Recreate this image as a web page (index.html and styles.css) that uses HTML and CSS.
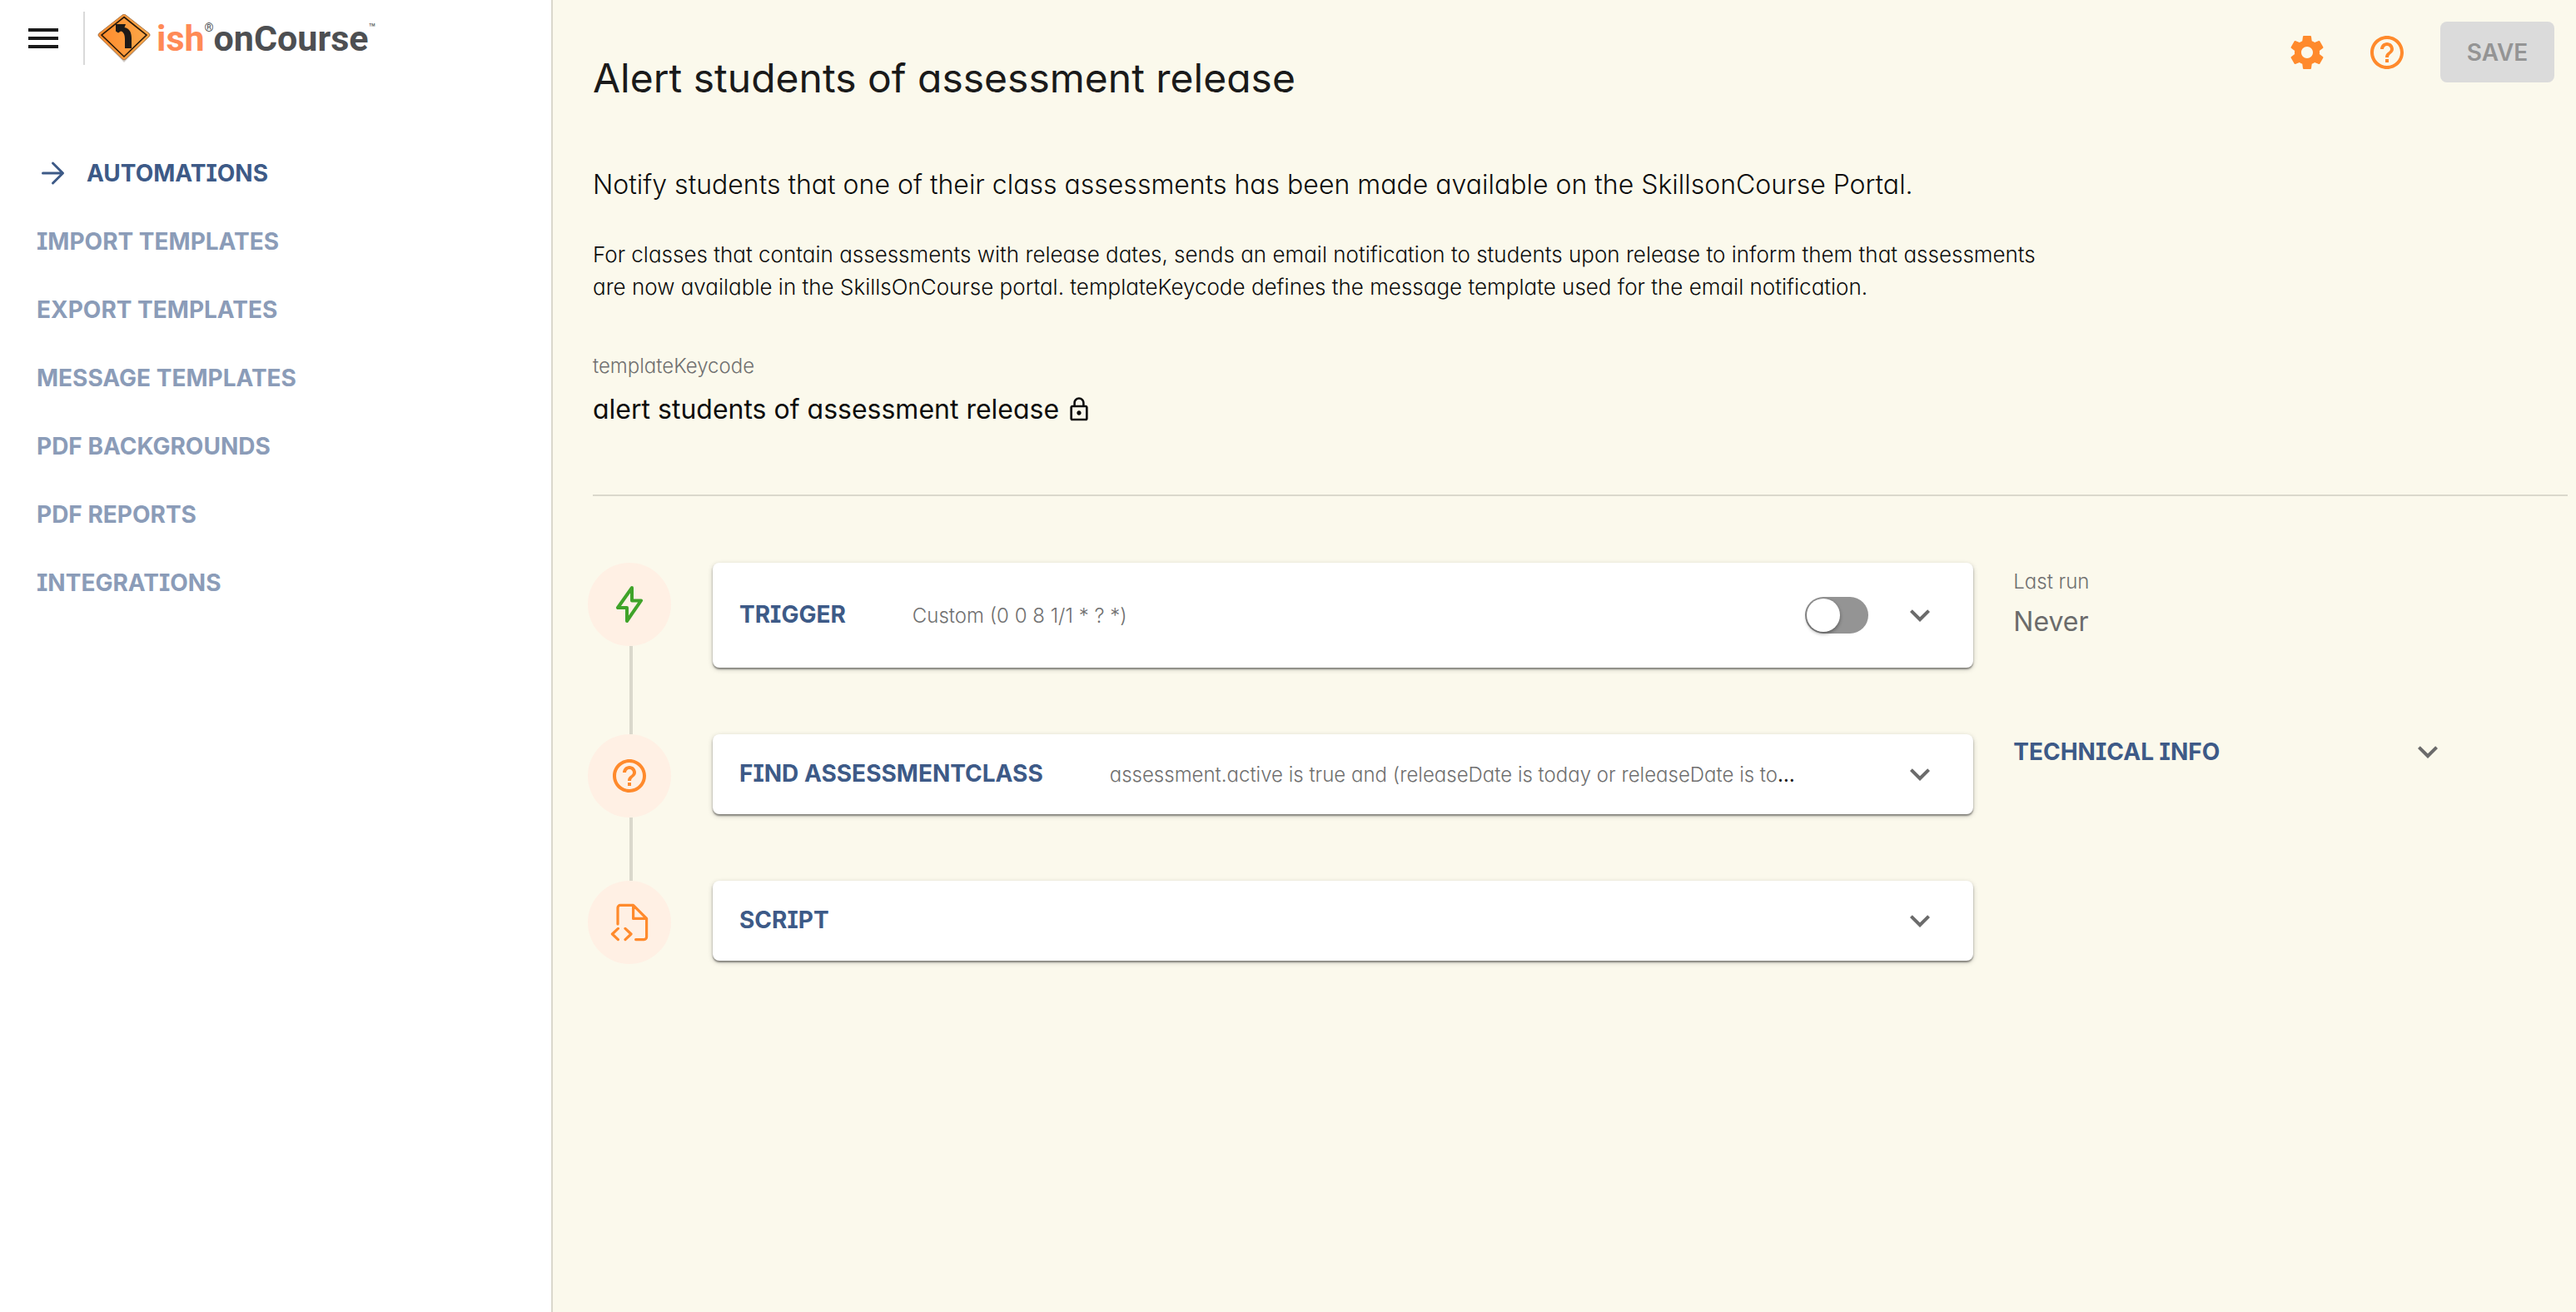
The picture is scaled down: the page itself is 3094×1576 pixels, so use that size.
FILE: index.html
```html
<!DOCTYPE html>
<html lang="en">
<head>
<meta charset="utf-8">
<title>Alert students of assessment release</title>
<link rel="stylesheet" href="styles.css">
</head>
<body>
<div class="app">
  <aside class="sidebar">
    <header class="brand-bar">
      <button class="icon-btn" type="button" aria-label="Menu">
        <svg class="icon" viewBox="0 0 24 24"><path fill="#1a1a1a" d="M3 18h18v-2H3v2zm0-5h18v-2H3v2zm0-7v2h18V6H3z"/></svg>
      </button>
      <a class="brand" href="#">
        <svg class="brand-sign" viewBox="0 0 66 58" aria-hidden="true">
          <defs><linearGradient id="sign" x1="0" y1="0" x2="1" y2="0"><stop offset="0" stop-color="#ff8a2c"/><stop offset="1" stop-color="#fba94a"/></linearGradient></defs>
          <path d="M33 1 65 25 33 58 1 25Z" fill="#6b5a48" opacity=".3"/>
          <path d="M31 1 Q33 -1 35 1L63 23Q65 25 63 27L35 54Q33 56 31 54L3 27Q1 25 3 23Z" fill="url(#sign)" stroke="#a8794c" stroke-width="1"/>
          <path d="M33 3.500 60 25 33 51 6 25Z" fill="none" stroke="#2a1a0a" stroke-width="1.600"/>
          <path d="M23 12h12l-1.500 4c6 1 8.500 6 8.500 13v12h-8V30c0-6-2-9-5-9.500l-3 2-3-2Z" fill="#1d1a18"/>
        </svg>
        <span class="brand-name"><span class="brand-ish">ish</span><sup class="brand-reg">®</sup><span>onCourse</span><sup class="brand-tm">™</sup></span>
      </a>
    </header>
    <nav class="nav">
      <a class="nav-link nav-link-active" href="#">
        <svg class="nav-arrow" viewBox="0 0 24 24" fill="none" stroke="currentColor" stroke-width="2" stroke-linecap="round" stroke-linejoin="round"><path d="M5 12h15.500M13 4l8 8-8 8"/></svg>
        AUTOMATIONS</a>
      <a class="nav-link" href="#">IMPORT TEMPLATES</a>
      <a class="nav-link" href="#">EXPORT TEMPLATES</a>
      <a class="nav-link" href="#">MESSAGE TEMPLATES</a>
      <a class="nav-link" href="#">PDF BACKGROUNDS</a>
      <a class="nav-link" href="#">PDF REPORTS</a>
      <a class="nav-link" href="#">INTEGRATIONS</a>
    </nav>
  </aside>

  <main class="main">
    <header class="page-head">
      <h1 class="title">Alert students of assessment release</h1>
      <div class="actions">
        <button class="icon-btn" type="button" aria-label="Settings">
          <svg class="icon accent" viewBox="0 0 24 24"><path fill="currentColor" d="M19.43 12.98c.04-.32.07-.64.07-.98s-.03-.66-.07-.98l2.11-1.65c.19-.15.24-.42.12-.64l-2-3.46c-.12-.22-.39-.3-.61-.22l-2.49 1c-.52-.4-1.08-.73-1.69-.98l-.38-2.65C14.46 2.18 14.25 2 14 2h-4c-.25 0-.46.18-.49.42l-.38 2.65c-.61.25-1.17.59-1.69.98l-2.49-1c-.23-.09-.49 0-.61.22l-2 3.46c-.13.22-.07.49.12.64l2.11 1.65c-.04.32-.07.65-.07.98s.03.66.07.98l-2.11 1.65c-.19.15-.24.42-.12.64l2 3.46c.12.22.39.3.61.22l2.49-1c.52.4 1.08.73 1.69.98l.38 2.65c.03.24.24.42.49.42h4c.25 0 .46-.18.49-.42l.38-2.65c.61-.25 1.17-.59 1.69-.98l2.49 1c.23.09.49 0 .61-.22l2-3.46c.12-.22.07-.49-.12-.64l-2.11-1.65zM12 15.5c-1.93 0-3.5-1.57-3.5-3.5s1.57-3.5 3.5-3.5 3.5 1.57 3.5 3.5-1.57 3.5-3.5 3.5z"/></svg>
        </button>
        <button class="icon-btn" type="button" aria-label="Help">
          <svg class="icon accent" viewBox="0 0 24 24"><path fill="currentColor" d="M11 18h2v-2h-2v2zm1-16C6.48 2 2 6.48 2 12s4.48 10 10 10 10-4.48 10-10S17.52 2 12 2zm0 18c-4.41 0-8-3.59-8-8s3.59-8 8-8 8 3.59 8 8-3.59 8-8 8zm0-14c-2.21 0-4 1.79-4 4h2c0-1.1.9-2 2-2s2 .9 2 2c0 2-3 1.75-3 5h2c0-2.25 3-2.5 3-5 0-2.21-1.79-4-4-4z"/></svg>
        </button>
        <button class="save" type="button" disabled>SAVE</button>
      </div>
    </header>

    <section class="summary">
      <p class="lead">Notify students that one of their class assessments has been made available on the SkillsonCourse Portal.</p>
      <p class="details">For classes that contain assessments with release dates, sends an email notification to students upon release to inform them that assessments are now available in the SkillsOnCourse portal. templateKeycode defines the message template used for the email notification.</p>
      <dl class="field">
        <dt class="field-label">templateKeycode</dt>
        <dd class="field-value">alert students of assessment release
          <svg class="lock" viewBox="0 0 24 24"><path fill="currentColor" d="M12 17c1.1 0 2-.9 2-2s-.9-2-2-2-2 .9-2 2 .9 2 2 2zm6-9h-1V6c0-2.76-2.24-5-5-5S7 3.24 7 6v2H6c-1.1 0-2 .9-2 2v10c0 1.1.9 2 2 2h12c1.1 0 2-.9 2-2V10c0-1.1-.9-2-2-2zM8.9 6c0-1.71 1.39-3.1 3.1-3.1s3.1 1.39 3.1 3.1v2H8.9V6zM18 20H6V10h12v10z"/></svg>
        </dd>
      </dl>
    </section>

    <div class="workflow">
      <ol class="steps">
        <li class="step">
          <div class="rail">
            <span class="badge badge-trigger">
              <svg class="icon" viewBox="0 0 24 24" fill="none" stroke="currentColor" stroke-width="2" stroke-linecap="round" stroke-linejoin="round"><path d="M13.500 2 5 14h5.500v8L19 9.700h-5.500z"/></svg>
            </span>
          </div>
          <div class="card card-tall">
            <div class="card-text"><h2 class="card-title">TRIGGER</h2><span class="card-note">Custom (0 0 8 1/1 * ? *)</span></div>
            <input class="switch" type="checkbox" role="switch" aria-label="Enable trigger">
            <button class="icon-btn" type="button" aria-label="Expand trigger"><svg class="icon muted" viewBox="0 0 24 24"><path fill="currentColor" d="M16.59 8.59 12 13.17 7.41 8.59 6 10l6 6 6-6z"/></svg></button>
          </div>
        </li>
        <li class="step">
          <div class="rail">
            <span class="badge">
              <svg class="icon" viewBox="0 0 24 24"><path fill="currentColor" d="M11 18h2v-2h-2v2zm1-16C6.48 2 2 6.48 2 12s4.48 10 10 10 10-4.48 10-10S17.52 2 12 2zm0 18c-4.41 0-8-3.59-8-8s3.59-8 8-8 8 3.59 8 8-3.59 8-8 8zm0-14c-2.21 0-4 1.79-4 4h2c0-1.1.9-2 2-2s2 .9 2 2c0 2-3 1.75-3 5h2c0-2.25 3-2.5 3-5 0-2.21-1.79-4-4-4z"/></svg>
            </span>
          </div>
          <div class="card">
            <div class="card-text"><h2 class="card-title">FIND ASSESSMENTCLASS</h2><span class="card-note">assessment.active is true and (releaseDate is today or releaseDate is tomorrow)</span></div>
            <button class="icon-btn" type="button" aria-label="Expand find"><svg class="icon muted" viewBox="0 0 24 24"><path fill="currentColor" d="M16.59 8.59 12 13.17 7.41 8.59 6 10l6 6 6-6z"/></svg></button>
          </div>
        </li>
        <li class="step">
          <div class="rail">
            <span class="badge">
              <svg class="icon" viewBox="0 0 24 24" fill="none" stroke="currentColor" stroke-width="1.600" stroke-linecap="round" stroke-linejoin="round"><path d="M5 13V3.200a1.500 1.500 0 0 1 1.500-1.500h7.800l8 8v11.100a1.500 1.500 0 0 1-1.500 1.500H15.800M14.300 1.700v8h8M5.200 15.700 1.700 19l3.500 3.300M9.500 15.700l3.500 3.300-3.500 3.300"/></svg>
            </span>
          </div>
          <div class="card">
            <div class="card-text"><h2 class="card-title">SCRIPT</h2></div>
            <button class="icon-btn" type="button" aria-label="Expand script"><svg class="icon muted" viewBox="0 0 24 24"><path fill="currentColor" d="M16.59 8.59 12 13.17 7.41 8.59 6 10l6 6 6-6z"/></svg></button>
          </div>
        </li>
      </ol>

      <aside class="info">
        <dl class="last-run">
          <dt class="field-label">Last run</dt>
          <dd class="last-run-value">Never</dd>
        </dl>
        <div class="tech">
          <h2 class="card-title">TECHNICAL INFO</h2>
          <button class="icon-btn" type="button" aria-label="Expand technical info"><svg class="icon muted" viewBox="0 0 24 24"><path fill="currentColor" d="M16.59 8.59 12 13.17 7.41 8.59 6 10l6 6 6-6z"/></svg></button>
        </div>
      </aside>
    </div>
  </main>
</div>
</body>
</html>
```
FILE: styles.css
```css
* { box-sizing: border-box; }

body {
  margin: 0;
  font-family: Inter, "Liberation Sans", sans-serif;
  font-feature-settings: "cv08", "cv11";
  font-size: 28px;
  color: #1a1a1a;
}

h1, h2, p, dl, dd, ol { margin: 0; padding: 0; }
a { color: inherit; text-decoration: none; }
ol { list-style: none; }

.app {
  display: grid;
  grid-template-columns: 664px 1fr;
  min-height: 100vh;
}

.sidebar {
  background: #fff;
  border-right: 2px solid #dad8cc;
}

.brand-bar {
  display: flex;
  align-items: center;
  gap: 24px;
  height: 92px;
  padding-left: 28px;
}

.icon-btn {
  display: flex;
  padding: 0;
  border: 0;
  background: none;
}

.icon { width: 48px; height: 48px; display: block; }
.accent { color: #ff8a2c; }
.muted { color: #6b6b6b; }

.brand {
  display: flex;
  align-items: center;
  gap: 6px;
  height: 64px;
  padding-left: 14px;
  border-left: 2px solid #d9d9d9;
}

.brand-sign { width: 66px; height: 58px; }

.brand-name {
  display: flex;
  font-family: Roboto, sans-serif;
  font-size: 43px;
  font-weight: 700;
  line-height: 58px;
  color: #4d4f52;
}

.brand-ish { color: #ff8a56; }
.brand-reg, .brand-tm { font-size: 14px; line-height: 32px; font-weight: 400; }

.nav {
  display: flex;
  flex-direction: column;
  padding: 75px 44px;
}

.nav-link {
  display: flex;
  align-items: center;
  gap: 24px;
  height: 82px;
  font-weight: 700;
  color: #8b9cb8;
}

.nav-link-active { color: #3d5a87; }
.nav-arrow { width: 36px; height: 36px; }

.main {
  min-width: 0;
  background: #fbf9ec;
}

.page-head {
  display: flex;
  justify-content: space-between;
  padding: 26px 26px 0 48px;
}

.title {
  padding-top: 32px;
  font-size: 48px;
  line-height: 72px;
  font-weight: 400;
}

.actions {
  display: flex;
  align-items: center;
  gap: 48px;
  height: 73px;
}

.save {
  width: 137px;
  height: 73px;
  margin-left: -8px;
  border: 0;
  border-radius: 8px;
  background: #dbdbdb;
  color: #949494;
  font: inherit;
  font-weight: 600;
}

.summary {
  margin: 0 10px 0 48px;
  padding: 68px 0 78px;
  border-bottom: 2px solid #dad8cc;
  font-weight: 300;
  color: #0d0d0d;
}

.lead { font-size: 32px; line-height: 48px; }

.details {
  max-width: 1760px;
  padding-top: 40px;
  font-size: 26px;
  line-height: 39px;
}

.field { padding-top: 58px; }

.field-label {
  font-size: 24px;
  line-height: 36px;
  font-weight: 300;
  color: #707070;
}

.field-value {
  display: flex;
  align-items: center;
  gap: 8px;
  padding-top: 10px;
  font-size: 32px;
  line-height: 48px;
  font-weight: 400;
}

.lock { width: 32px; height: 32px; }

.workflow {
  display: grid;
  grid-template-columns: minmax(0, 5fr) minmax(0, 2fr);
  gap: 48px;
  padding: 80px 10px 80px 42px;
}

.steps {
  display: flex;
  flex-direction: column;
}

.step {
  display: grid;
  grid-template-columns: 100px minmax(0, 1fr);
  gap: 50px;
}

.step:not(:last-child) .card { margin-bottom: 80px; }

.rail {
  display: flex;
  flex-direction: column;
  align-items: center;
}

.step:not(:last-child) .rail::after {
  content: "";
  flex: 1;
  width: 4px;
  margin-left: 4px;
  background: #dad8cc;
}

.step:last-child { height: 96px; }

.badge {
  display: grid;
  place-items: center;
  flex: none;
  width: 100px;
  height: 100px;
  border-radius: 50%;
  background: #fff0e4;
  color: #ff8a2c;
}

.badge-trigger { color: #3fa329; }

.card {
  display: flex;
  align-items: center;
  height: 96px;
  padding: 0 40px 0 32px;
  border-radius: 8px;
  background: #fff;
  box-shadow: 0 2px 2px rgba(0, 0, 0, .4), 0 2px 6px rgba(0, 0, 0, .2);
}

.card-tall { height: 126px; }

.card-text {
  flex: 1;
  min-width: 0;
  margin-right: 114px;
  overflow: hidden;
  white-space: nowrap;
  text-overflow: ellipsis;
  font-size: 24px;
  line-height: 42px;
}

.card-title {
  display: inline;
  font-size: 28px;
  font-weight: 700;
  color: #3d5a87;
}

.card-note {
  margin-left: 80px;
  font-weight: 300;
  color: #707070;
}

.card-tall .card-text { margin-right: 0; }

.switch {
  appearance: none;
  display: flex;
  align-items: center;
  width: 76px;
  height: 44px;
  margin: 0 38px 0 0;
  padding: 2px;
  border-radius: 22px;
  background: #949494;
}

.switch::before {
  content: "";
  width: 40px;
  height: 40px;
  border-radius: 50%;
  background: #fff;
  box-shadow: 0 2px 4px rgba(0, 0, 0, .4);
}

.info { padding-top: 5px; }

.last-run-value {
  padding-top: 6px;
  font-size: 32px;
  line-height: 48px;
  font-weight: 400;
  color: #6b6b6b;
}

.tech {
  display: flex;
  justify-content: space-between;
  align-items: center;
  padding: 108px 144px 0 0;
}
```
